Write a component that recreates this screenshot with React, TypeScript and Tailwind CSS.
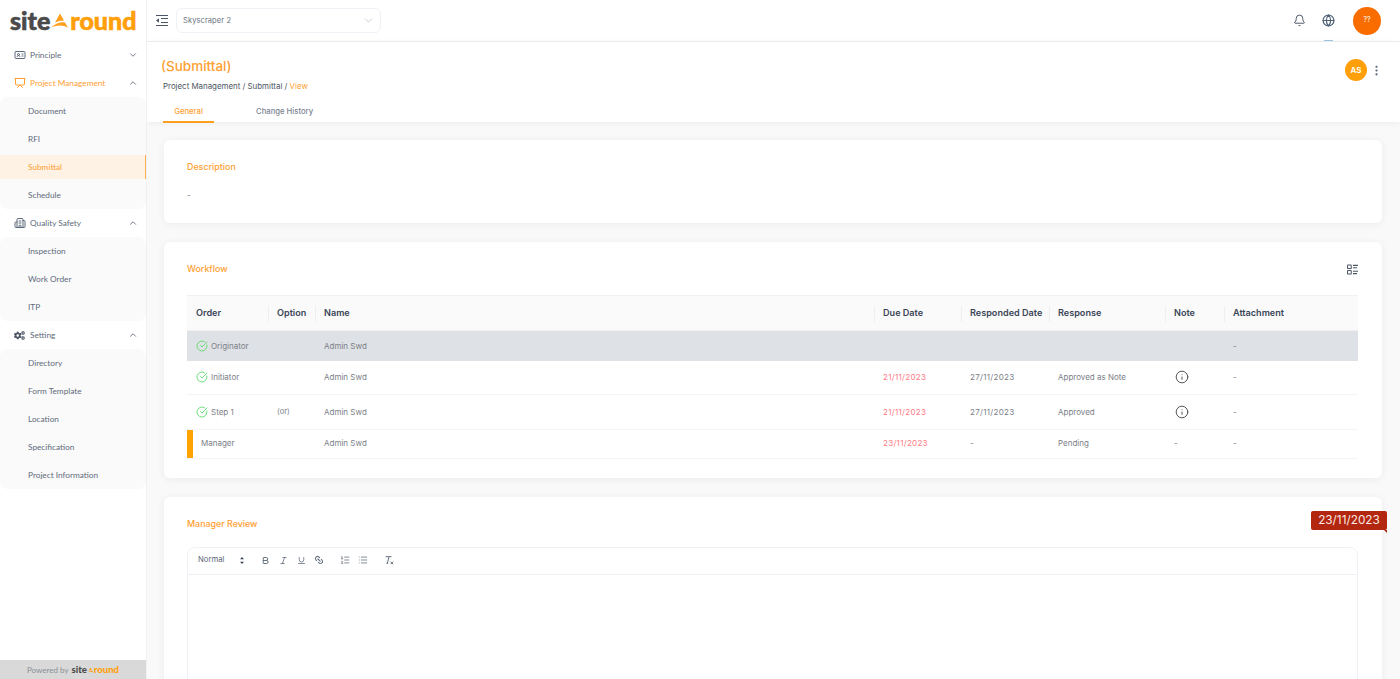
import { Bell, Bold, Building2, ChevronDown, ChevronUp, CircleCheckBig, EllipsisVertical, Globe, IdCard, Info, Italic, Link2, List, ListOrdered, Presentation, Underline } from "lucide-react";
import { FaCogs } from "react-icons/fa";

const sideFont = "font-['Lato',sans-serif]";

function Logo({ small }: { small?: boolean }) {
  return (
    <div className={`flex items-center font-['Lato',sans-serif] font-black leading-none ${small ? "text-[9.5px]" : "text-[25px] [-webkit-text-stroke:0.6px]"}`}>
      <span className="text-[#4a4a4a]">site</span>
      <svg viewBox="0 0 20 14" className={small ? "h-[6px] w-[7px]" : "h-[15px] w-[20px]"}>
        <path d="M10 0 L14 7 Q9 7 5 9 Z" fill="#ff9f1c" />
        <path d="M1 14 Q8 8 15 9 L18 14 Q10 10 1 14 Z" fill="#ff9f1c" />
      </svg>
      <span className="text-[#ff9f0a]">round</span>
    </div>
  );
}

function SideHead({ label, icon, active, open }: { label: string; icon: React.ReactNode; active?: boolean; open?: boolean }) {
  return (
    <div className={`flex h-7 items-center pl-[14px] pr-[8px] text-[8.25px] ${active ? "text-[#ffa033]" : "text-[#5e6a7a]"}`}>
      <span className="flex w-[16px] justify-start">{icon}</span>
      <span className="flex-1">{label}</span>
      {open ? <ChevronUp size={10} strokeWidth={2.2} className="text-[#6b7280]" /> : <ChevronDown size={10} strokeWidth={2.2} className="text-[#6b7280]" />}
    </div>
  );
}

function SideGroup({ items, current }: { items: string[]; current?: string }) {
  return (
    <div className="rounded-[8px] bg-[#fafafa]">
      {items.map((item) =>
        item === current ? (
          <div key={item} className="my-[2px] flex h-[24px] items-center border-r border-[#ffb057] bg-[#fdf2e3] pl-[28px] text-[8.25px] text-[#ffa033]">
            {item}
          </div>
        ) : (
          <div key={item} className="flex h-[28px] items-center pl-[28px] text-[8.25px] text-[#5e6a7a]">
            {item}
          </div>
        )
      )}
    </div>
  );
}

function Sidebar() {
  return (
    <aside className={`relative z-10 flex w-[146px] shrink-0 flex-col bg-white shadow-[1px_0_0_#f1f1f1] ${sideFont}`}>
      <div className="flex h-[41px] items-center pb-[1px] pl-[10px]">
        <Logo />
      </div>
      <nav className="flex-1">
        <SideHead label="Principle" icon={<IdCard size={12} className="text-[#5e6a7a]" />} />
        <SideHead label="Project Management" icon={<Presentation size={12} className="text-[#ffa033]" />} active open />
        <SideGroup items={["Document", "RFI", "Submittal", "Schedule"]} current="Submittal" />
        <SideHead label="Quality Safety" icon={<Building2 size={12} className="text-[#5e6a7a]" />} open />
        <SideGroup items={["Inspection", "Work Order", "ITP"]} />
        <SideHead label="Setting" icon={<FaCogs size={11} className="text-[#4b5563]" />} open />
        <SideGroup items={["Directory", "Form Template", "Location", "Specification", "Project Information"]} />
      </nav>
      <div className="flex h-[19px] items-center justify-center gap-[3px] bg-[#d9d9d9] text-[8px] text-[#8a8f96]">
        <span>Powered by</span>
        <Logo small />
      </div>
    </aside>
  );
}

function TopBar() {
  return (
    <header className="relative flex h-[42px] shrink-0 items-center border-b border-[#eeeeee] bg-white pl-[10px] pr-[19px]">
      <svg viewBox="0 0 12 11" className="h-[11px] w-[12px] text-[#4b5563]" fill="none" stroke="currentColor" strokeWidth="1">
        <path d="M0 .5h12M5 3.5h7M5 7.5h7M0 10.5h12" />
        <path d="M3 3.2v4.6L0 5.5Z" fill="currentColor" stroke="none" />
      </svg>
      <div className="ml-[8px] flex h-[25px] w-[205px] items-center justify-between rounded-[6px] border border-[#eef1f6] pl-[6px] pr-[5px] text-[7.5px] text-[#6b7280]">
        <span className="tracking-[0.1px]">Skyscraper 2</span>
        <ChevronDown size={13} strokeWidth={1} className="text-[#9ca3af]" />
      </div>
      <div className="ml-auto flex items-center">
        <Bell size={13} strokeWidth={1.8} className="text-[#4b5563]" />
        <Globe size={13} strokeWidth={2.2} className="ml-[16px] text-[#4f6077]" />
        <div className="ml-[18px] flex h-[28px] w-[28px] items-center justify-center rounded-full bg-[#f96c00] text-[7px] text-white">??</div>
      </div>
      <div className="absolute right-[67px] top-[40px] h-[1px] w-[9px] bg-[#9cc7e4]" />
    </header>
  );
}

function SubHeader() {
  return (
    <div className="relative flex h-[80px] shrink-0 flex-col bg-white pl-[15px] shadow-[0_1px_6px_rgba(0,0,0,0.06)]">
      <h1 className="mt-[14px] text-[13.5px] font-medium leading-[20px] text-[#ffa033]">(Submittal)</h1>
      <div className="ml-[2px] mt-[4px] text-[7.9px] leading-[12px] text-[#4b5563]">
        Project Management / Submittal / <span className="text-[#ffa033]">View</span>
      </div>
      <div className="ml-[2px] mt-[12px] flex text-[7.7px] font-medium">
        <div className="flex h-[19px] w-[51px] justify-center border-b-2 border-[#ffa01e] pt-[2px] text-[#ffa033]">General</div>
        <div className="ml-[42px] pt-[2px] text-[#7b8494]">Change History</div>
      </div>
      <div className="absolute right-[17px] top-[17px] flex items-center">
        <div className="flex h-[22px] w-[22px] items-center justify-center rounded-full bg-[#ff9f0a] text-[8px] font-semibold text-white">AS</div>
        <EllipsisVertical size={13} strokeWidth={2} className="ml-[3px] text-[#4f6077]" />
      </div>
    </div>
  );
}

const ColHead = ({ label, divider = true }: { label: string; divider?: boolean }) => (
  <th className="relative pl-[9px] text-left text-[9.1px] font-semibold text-[#3b4658]">
    {divider && <span className="absolute left-0 top-[10px] h-[16px] w-px bg-[#efefef]" />}
    {label}
  </th>
);

const Check = () => <CircleCheckBig size={12} strokeWidth={1.8} className="mr-[3px] text-[#5fd96b]" />;
const NoteIcon = () => <Info size={14} strokeWidth={1.6} className="ml-[1px] text-[#4b4b4b]" />;

function WorkflowTable() {
  const cell = "pl-[9px] text-[8px] text-[#7b8087]";
  const late = "pl-[9px] text-[8px] tracking-[0.3px] text-[#ff7b84]";
  const date = "pl-[9px] text-[8px] tracking-[0.3px] text-[#7b8087]";
  const lastRow = "pb-[2px]";
  return (
    <table className="w-full table-fixed border-collapse">
      <colgroup>
        <col className="w-[81px]" />
        <col className="w-[47px]" />
        <col className="w-[559px]" />
        <col className="w-[87px]" />
        <col className="w-[88px]" />
        <col className="w-[116px]" />
        <col className="w-[59px]" />
        <col />
      </colgroup>
      <thead>
        <tr className="h-[35px] border-t border-b border-[#f0f0f0] bg-[#fafafa]">
          <ColHead label="Order" divider={false} />
          <ColHead label="Option" />
          <ColHead label="Name" />
          <ColHead label="Due Date" />
          <ColHead label="Responded Date" />
          <ColHead label="Response" />
          <ColHead label="Note" />
          <ColHead label="Attachment" />
        </tr>
      </thead>
      <tbody>
        <tr className="h-[30px] bg-[#dee1e5]">
          <td className={cell}><span className="flex items-center whitespace-nowrap"><Check />Originator</span></td>
          <td />
          <td className={cell}>Admin Swd</td>
          <td />
          <td />
          <td />
          <td />
          <td className={cell}>-</td>
        </tr>
        <tr className="h-[34px] border-b border-[#f3f4f6]">
          <td className={cell}><span className="flex items-center"><Check />Initiator</span></td>
          <td />
          <td className={cell}>Admin Swd</td>
          <td className={late}>21/11/2023</td>
          <td className={date}>27/11/2023</td>
          <td className={cell}>Approved as Note</td>
          <td className={cell}><NoteIcon /></td>
          <td className={cell}>-</td>
        </tr>
        <tr className="h-[35px] border-b border-[#f3f4f6]">
          <td className={cell}><span className="flex items-center"><Check />Step 1</span></td>
          <td className="pl-[9px] text-[7.5px] text-[#7b8087]">(or)</td>
          <td className={cell}>Admin Swd</td>
          <td className={late}>21/11/2023</td>
          <td className={date}>27/11/2023</td>
          <td className={cell}>Approved</td>
          <td className={cell}><NoteIcon /></td>
          <td className={cell}>-</td>
        </tr>
        <tr className="h-[28px] border-b border-[#f3f4f6]">
          <td className="text-[8px] text-[#7b8087]">
            <span className="flex h-[28px] items-center">
              <span className="h-full w-[6px] bg-[#ffa300]" />
              <span className="ml-[8px] pb-[2px]">Manager</span>
            </span>
          </td>
          <td />
          <td className={`${cell} ${lastRow}`}>Admin Swd</td>
          <td className={`${late} ${lastRow}`}>23/11/2023</td>
          <td className={`${cell} ${lastRow}`}>-</td>
          <td className={`${cell} ${lastRow}`}>Pending</td>
          <td className={`${cell} ${lastRow}`}>-</td>
          <td className={`${cell} ${lastRow}`}>-</td>
        </tr>
      </tbody>
    </table>
  );
}

function Card({ className, children }: { className?: string; children: React.ReactNode }) {
  return <section className={`rounded-[6px] bg-white pl-[23px] pr-[24px] shadow-[0_1px_8px_rgba(0,0,0,0.06)] ${className ?? ""}`}>{children}</section>;
}

const CardTitle = ({ children }: { children: React.ReactNode }) => (
  <h2 className="text-[8.9px] font-medium leading-[14px] text-[#ffa033]">{children}</h2>
);

function Toolbar() {
  return (
    <div className="flex h-[27px] items-center border-b border-[#eef1f6] pb-[2px] pl-[10px] text-[#5b6675]">
      <span className="w-[41px] text-[7.7px]">Normal</span>
      <svg viewBox="0 0 7 9" className="h-[7px] w-[6px] text-[#374151]" fill="currentColor">
        <path d="M3.5 0 6 3H1ZM3.5 9 1 6h5Z" />
      </svg>
      <Bold size={9} strokeWidth={2.4} className="ml-[16px]" />
      <Italic size={9} strokeWidth={2} className="ml-[9px]" />
      <Underline size={9} strokeWidth={2} className="ml-[9px]" />
      <Link2 size={10} strokeWidth={2.4} className="ml-[8px] -rotate-[135deg]" />
      <ListOrdered size={10} strokeWidth={1.8} className="ml-[16px]" />
      <List size={10} strokeWidth={1.8} className="ml-[8px]" />
      <svg viewBox="0 0 12 12" className="ml-[16px] h-[10px] w-[10px]" fill="none" stroke="currentColor" strokeWidth="1.1">
        <path d="M2 2h7M6 2 4 10M3 10h2M8 8l3 3M11 8l-3 3" />
      </svg>
    </div>
  );
}

export default function App() {
  return (
    <div className="flex h-screen overflow-hidden bg-[#f9f9f9] font-['Inter',sans-serif]">
      <Sidebar />
      <div className="flex min-w-0 flex-1 flex-col">
        <TopBar />
        <SubHeader />
        <main className="relative flex-1 overflow-hidden px-[18px] pt-[18px]">
          <Card className="h-[83px] pt-[20px]">
            <CardTitle>Description</CardTitle>
            <p className="mt-[15px] text-[8px] text-[#6b7280]">-</p>
          </Card>
          <Card className="mt-[19px] h-[236px] pt-[20px]">
            <div className="flex items-center justify-between">
              <CardTitle>Workflow</CardTitle>
              <svg viewBox="0 0 12 12" className="h-[11px] w-[11px] text-[#4b5563]" fill="none" stroke="currentColor" strokeWidth="1.1">
                <rect x="0.6" y="1" width="4" height="4" rx="0.5" />
                <rect x="0.6" y="7" width="4" height="4" rx="0.5" />
                <path d="M6.5 1.5H12M6.5 4H11M6.5 8H12M6.5 10.5H11" />
              </svg>
            </div>
            <div className="mt-[19px]">
              <WorkflowTable />
            </div>
          </Card>
          <Card className="mt-[19px] h-[260px] pt-[20px]">
            <CardTitle>Manager Review</CardTitle>
            <div className="mt-[16px] h-[220px] rounded-[8px] border border-[#eef1f6]">
              <Toolbar />
            </div>
          </Card>
          <div className="absolute right-[13px] top-[389px] flex h-[19px] w-[76px] items-center justify-center rounded-[2px] bg-[#b3260f] font-['Inter',sans-serif] text-[11.8px] text-[#fbe9e4]">
            23/11/2023
            <span className="absolute -bottom-[3px] right-0 h-0 w-0 border-l-[3px] border-t-[3px] border-l-transparent border-t-[#b3260f]" />
          </div>
        </main>
      </div>
    </div>
  );
}
